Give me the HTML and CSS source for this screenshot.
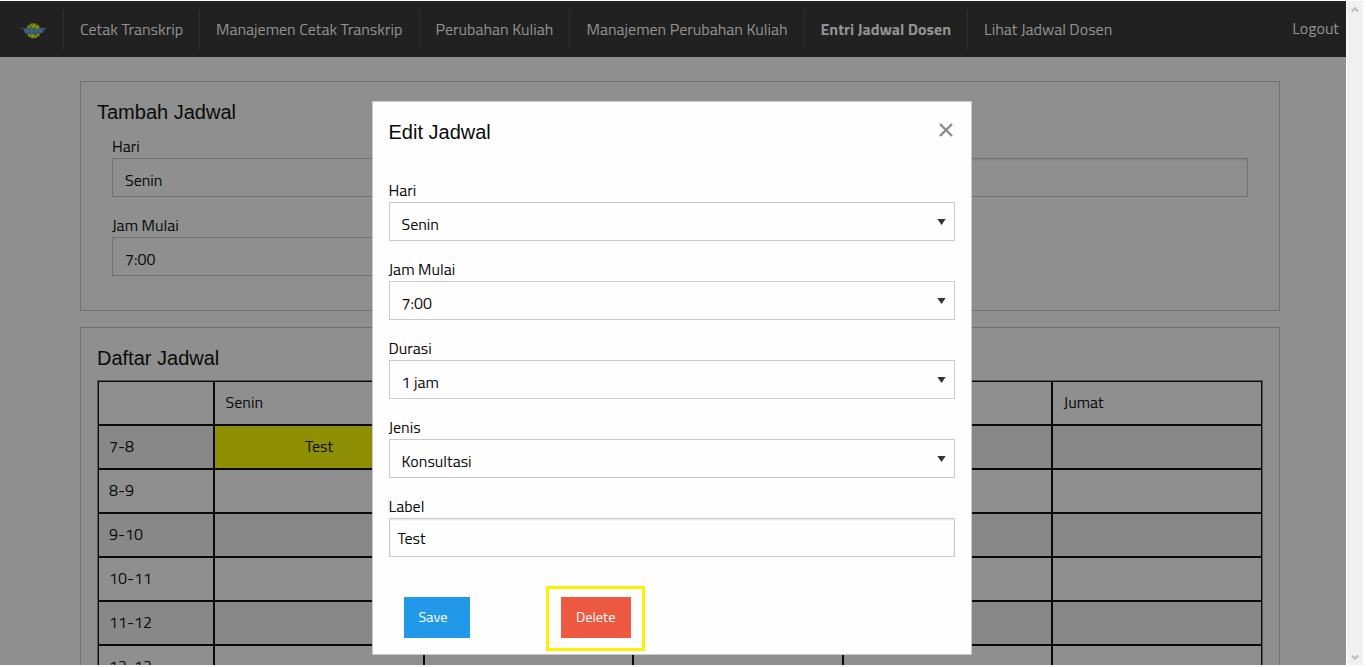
FILE: index.html
```html
<!DOCTYPE html>
<html lang="id">
<head>
<meta charset="utf-8">
<title>Entri Jadwal Dosen</title>
<link rel="stylesheet" href="styles.css">
</head>
<body>
<div class="window">
  <div class="page">
    <nav class="topbar">
      <a class="logo">
        <svg width="26" height="16" viewBox="0 0 26 16">
          <circle cx="12.5" cy="7.8" r="6.300" fill="#4e7318" stroke="#8f8d08" stroke-width="2.400" stroke-dasharray="2.600 .6"/>
          <path d="M8 5l3-2 1 2M13 3l3 2M9 12l2 1M13 12l3-1" stroke="#1d7034" stroke-width="1.300" fill="none"/>
          <path d="M11 3.500h3M10 12.500h3M15 5h2" stroke="#a09a0c" stroke-width="1.400"/>
          <path d="M0 5h6l3 1h7l3-1h6v1h-2v1h1l-1 1h-1v2h-4l-1 1H7l-1-1H4L3 9V8L2 7h1V6H0z" fill="#34587a"/>
          <path d="M5 8h3m2 0h2m2 0h2m2 0h3" stroke="#557387" fill="none"/>
        </svg>
      </a>
      <a class="item i1"><span>Cetak Transkrip</span></a>
      <a class="item i2"><span>Manajemen Cetak Transkrip</span></a>
      <a class="item i3"><span>Perubahan Kuliah</span></a>
      <a class="item i4"><span>Manajemen Perubahan Kuliah</span></a>
      <a class="item i5 active"><span>Entri Jadwal Dosen</span></a>
      <a class="item i6"><span>Lihat Jadwal Dosen</span></a>
      <a class="logout">Logout</a>
    </nav>

    <section class="card add">
      <h5>Tambah Jadwal</h5>
      <div class="columns">
        <div>
          <div class="field"><label>Hari</label><div class="select">Senin</div></div>
          <div class="field"><label>Jam Mulai</label><div class="select">7:00</div></div>
        </div>
        <div>
          <div class="field"><label></label><div class="input"></div></div>
        </div>
      </div>
    </section>

    <section class="card list">
      <h5>Daftar Jadwal</h5>
      <div class="schedule">
        <i></i><i>Senin</i><i></i><i></i><i></i><i>Jumat</i>
        <b>7-8</b><b class="busy">Test</b><b></b><b></b><b></b><b></b>
        <i>8-9</i><i></i><i></i><i></i><i></i><i></i>
        <b>9-10</b><b></b><b></b><b></b><b></b><b></b>
        <i>10-11</i><i></i><i></i><i></i><i></i><i></i>
        <b>11-12</b><b></b><b></b><b></b><b></b><b></b>
        <i>12-13</i><i></i><i></i><i></i><i></i><i></i>
      </div>
    </section>
  </div>

  <div class="scrollbar">
    <svg width="8" height="7" viewBox="0 0 8 7"><path d="M.8 5.500L4 2.200l3.200 3.300" fill="none" stroke="#bcbcbc" stroke-width="2"/></svg>
    <svg width="8" height="7" viewBox="0 0 8 7"><path d="M.8 1.500L4 4.800l3.200-3.300" fill="none" stroke="#bcbcbc" stroke-width="2"/></svg>
  </div>

  <div class="modal">
    <header>
      <h5>Edit Jadwal</h5>
      <svg width="14" height="14" viewBox="0 0 14 14"><path d="M1 1l12 12M13 1L1 13" stroke="#8a8a8a" stroke-width="2.400"/></svg>
    </header>
    <div class="field"><label>Hari</label><div class="select">Senin<svg class="arrow" width="9" height="6" viewBox="0 0 9 6"><path d="M.4 0h8.200L4.500 6z" fill="#333"/></svg></div></div>
    <div class="field"><label>Jam Mulai</label><div class="select">7:00<svg class="arrow" width="9" height="6" viewBox="0 0 9 6"><path d="M.4 0h8.200L4.500 6z" fill="#333"/></svg></div></div>
    <div class="field"><label>Durasi</label><div class="select">1 jam<svg class="arrow" width="9" height="6" viewBox="0 0 9 6"><path d="M.4 0h8.200L4.500 6z" fill="#333"/></svg></div></div>
    <div class="field"><label>Jenis</label><div class="select">Konsultasi<svg class="arrow" width="9" height="6" viewBox="0 0 9 6"><path d="M.4 0h8.200L4.500 6z" fill="#333"/></svg></div></div>
    <div class="field"><label>Label</label><div class="input">Test</div></div>
    <div class="actions">
      <a class="button save">Save</a>
      <div class="highlight"><a class="button delete">Delete</a></div>
    </div>
  </div>
</div>
</body>
</html>
```
FILE: styles.css
```css
* { box-sizing: border-box; }
body {
  margin: 0;
  background: #fff;
  color: #0a0a0a;
  font: 16px/24px "Titillium Web", Roboto, sans-serif;
  overflow: hidden;
}
.window {
  position: relative;
  display: flex;
  gap: 1px;
  width: 1363px;
  height: 665px;
  padding-top: 1px;
  overflow: hidden;
}
.page {
  width: 1346px;
  height: 664px;
  background: #8f8f8f;
  overflow: hidden;
}
h5 {
  margin: 0;
  font: 20px/28px "Liberation Sans", Arial, sans-serif;
}

/* Top navigation */
.topbar {
  display: flex;
  align-items: center;
  height: 56px;
  background: #212121;
  color: #929292;
  white-space: nowrap;
}
.logo {
  display: flex;
  align-items: center;
  width: 63px;
  height: 40px;
  padding: 4px 0 0 21px;
}
.item {
  height: 40px;
  padding-left: 16px;
  border-left: 1px solid #303030;
  line-height: 40px;
}
.i1 { width: 136px; }
.i2 { width: 220px; }
.i3 { width: 150px; padding-left: 15.5px; }
.i4 { width: 235px; padding-left: 16.5px; }
.i5 { width: 163px; padding-left: 15.5px; }
.active { font-weight: bold; }
.logout { margin-left: auto; padding: 0 7px 2px 0; }

/* Cards */
.card {
  width: 1200px;
  margin-left: 80px;
  border: 1px solid #717171;
}
.add { height: 230px; margin-top: 24px; padding: 16px 31px; }
.add h5 { margin-left: -15px; }
.add .columns {
  display: grid;
  grid-template-columns: 1fr 1fr;
  gap: 32px;
  padding-top: 8px;
}
.list { height: 420px; margin-top: 16px; padding: 16px; }

/* Form fields */
.field { height: 63px; margin-bottom: 16px; }
.field label { display: block; height: 24px; line-height: 25px; }
.select, .input {
  height: 39px;
  border: 1px solid #717171;
}
.select {
  display: flex;
  align-items: center;
  justify-content: space-between;
  padding: 4px 8px 0 12px;
}
.input {
  padding: 0 8px;
  line-height: 39px;
  box-shadow: inset 0 1px 2px rgba(10, 10, 10, .1);
}

/* Schedule grid */
.schedule {
  display: grid;
  grid-template-columns: 114px 208px 207px 208px 207px 208px;
  grid-auto-rows: 42px;
  gap: 2px;
  width: 1166px;
  margin-top: 8px;
  padding: 1px;
  border: 1px solid #555;
  background: #090909;
}
.schedule > * {
  padding-left: 10px;
  font-style: normal;
  font-weight: normal;
  line-height: 40px;
  background: #8f8f8f;
}
.schedule > i:nth-child(-n+6) { padding-left: 10.6px; }
.schedule > b { background: #888; }
.schedule > .busy { padding: 0; background: #8f8f05; text-align: center; }

/* Scrollbar */
.scrollbar {
  display: flex;
  flex-direction: column;
  justify-content: space-between;
  align-items: center;
  width: 16px;
  padding: 5px 0 4px;
  background: #f0f0f0;
}

/* Edit dialog */
.modal {
  position: absolute;
  left: 372px;
  top: 101px;
  width: 600px;
  height: 554px;
  padding: 16px;
  border: 1px solid #c8c8c8;
  background: #fefefe;
}
.modal header {
  display: flex;
  justify-content: space-between;
  height: 60px;
}
.modal header svg { margin: 5px 2.5px 0 0; }
.modal .select, .modal .input { border-color: #cacaca; }
.modal h5, .modal label { text-indent: -0.5px; }
.modal .select { padding-left: 11.5px; }
.modal .input { padding-left: 7.5px; }
.arrow { margin-top: -4px; }
.actions {
  display: flex;
  align-items: flex-start;
  padding: 13px 0 0 15px;
}
.button {
  display: block;
  height: 41px;
  padding-left: 15px;
  color: #fefefe;
  font-size: 14.4px;
  line-height: 41px;
}
.save { width: 66px; margin-top: 11px; padding-left: 14.5px; background: #2199e8; }
.highlight {
  width: 99px;
  height: 65px;
  margin-left: 76px;
  padding: 8px 12px;
  border: 3px solid #fff000;
}
.delete { width: 70px; background: #ec5840; }
```
